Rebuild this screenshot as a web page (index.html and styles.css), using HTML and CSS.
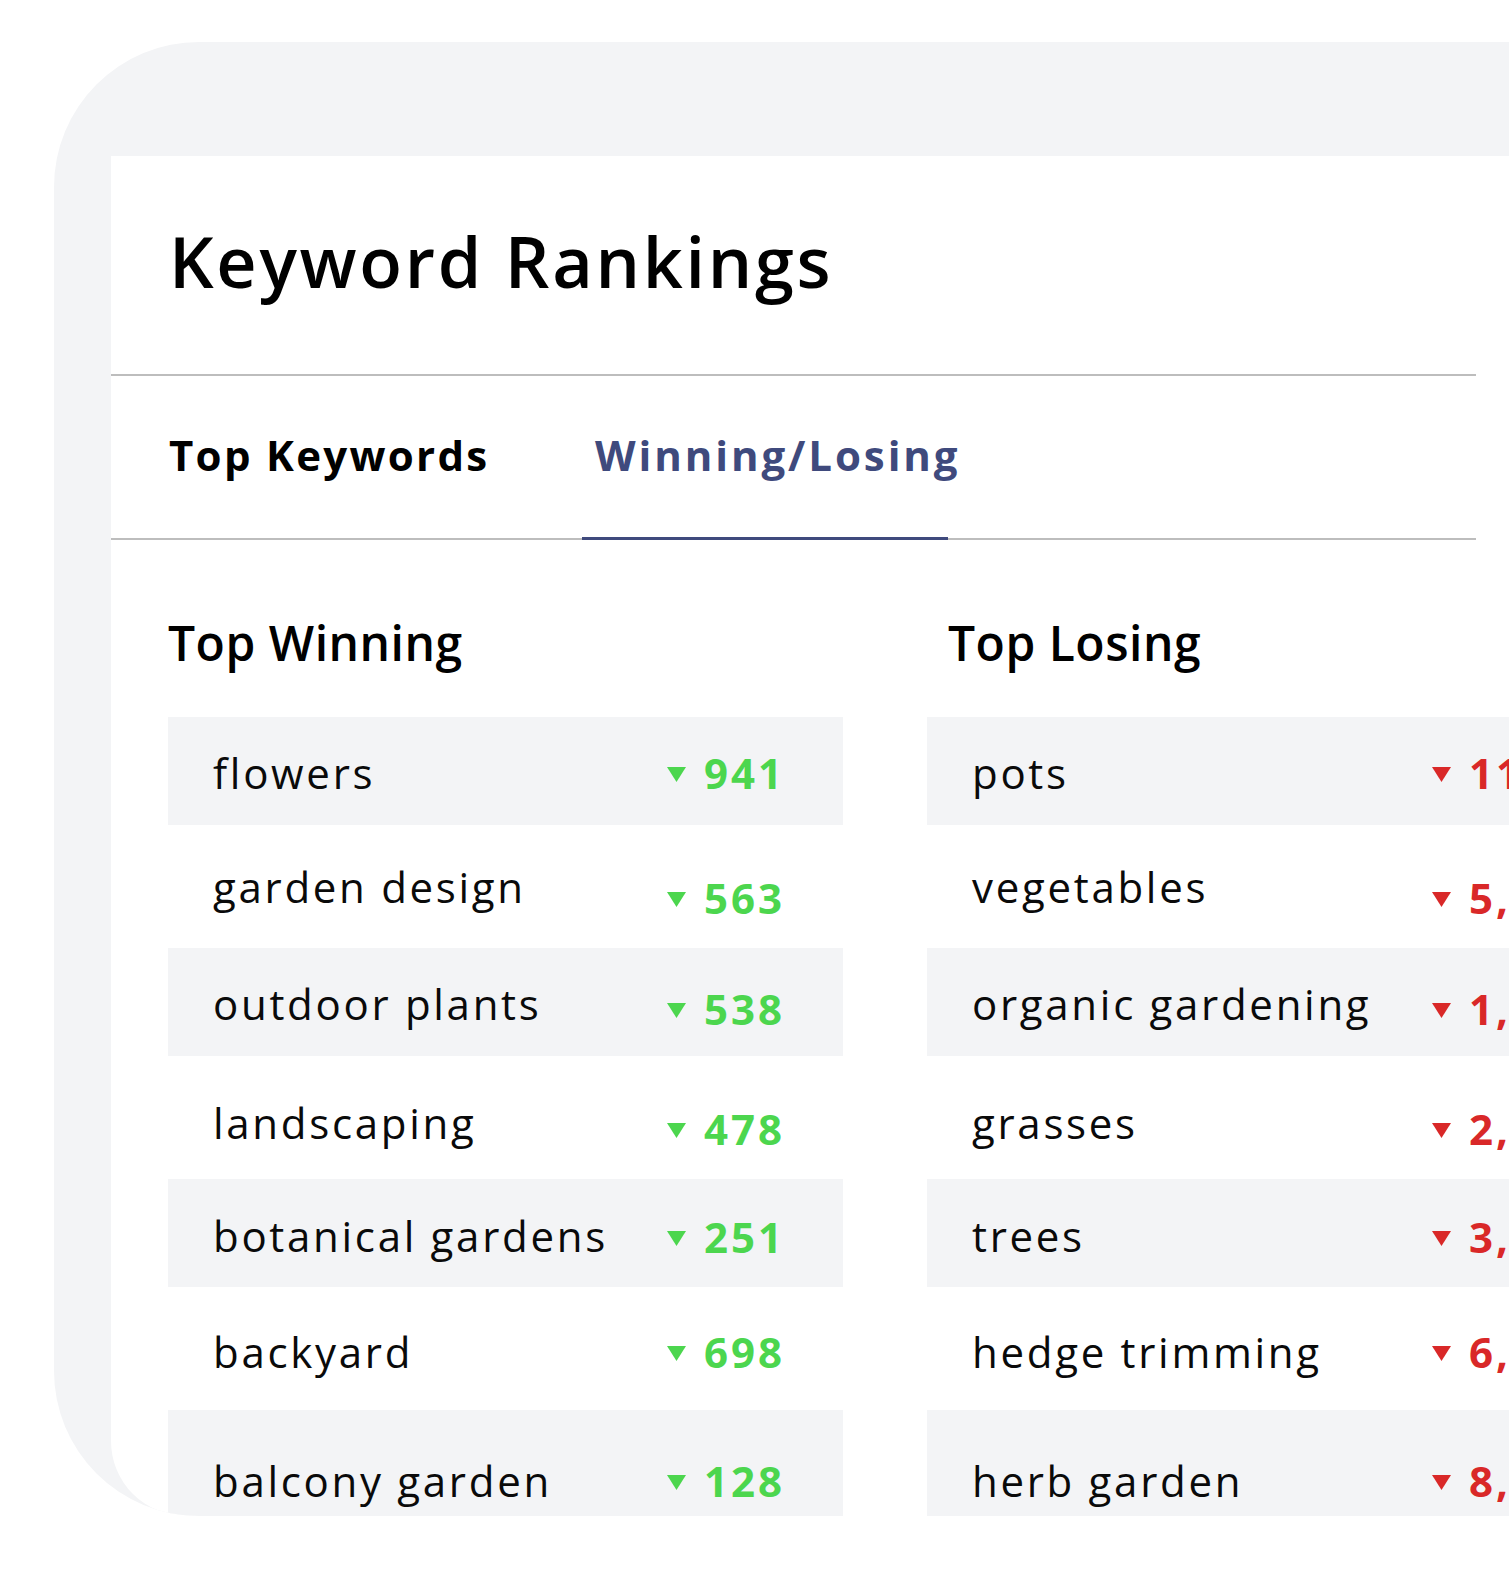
FILE: index.html
```html
<!DOCTYPE html>
<html lang="en">
<head>
<meta charset="utf-8">
<title>Keyword Rankings</title>
<link rel="stylesheet" href="styles.css">
</head>
<body>
<div class="frame">
  <section class="card">
    <header class="card-head">
      <h1 class="title">Keyword Rankings</h1>
    </header>
    <nav class="tabs">
      <div class="tab tab-first">Top Keywords</div>
      <div class="tab tab-active">Winning/Losing</div>
    </nav>
    <div class="columns">
      <div class="col col-win">
        <h2 class="col-title">Top Winning</h2>
        <ul class="rows">
          <li class="row"><span class="kw">flowers</span><span class="val up"><svg class="tri" viewBox="0 0 19 22" width="19" height="22"><polygon points="0,0 19,0 9.5,15"/></svg>941</span></li>
          <li class="row"><span class="kw">garden design</span><span class="val up"><svg class="tri" viewBox="0 0 19 22" width="19" height="22"><polygon points="0,0 19,0 9.5,15"/></svg>563</span></li>
          <li class="row"><span class="kw">outdoor plants</span><span class="val up"><svg class="tri" viewBox="0 0 19 22" width="19" height="22"><polygon points="0,0 19,0 9.5,15"/></svg>538</span></li>
          <li class="row"><span class="kw">landscaping</span><span class="val up"><svg class="tri" viewBox="0 0 19 22" width="19" height="22"><polygon points="0,0 19,0 9.5,15"/></svg>478</span></li>
          <li class="row"><span class="kw">botanical gardens</span><span class="val up"><svg class="tri" viewBox="0 0 19 22" width="19" height="22"><polygon points="0,0 19,0 9.5,15"/></svg>251</span></li>
          <li class="row"><span class="kw">backyard</span><span class="val up"><svg class="tri" viewBox="0 0 19 22" width="19" height="22"><polygon points="0,0 19,0 9.5,15"/></svg>698</span></li>
          <li class="row"><span class="kw">balcony garden</span><span class="val up"><svg class="tri" viewBox="0 0 19 22" width="19" height="22"><polygon points="0,0 19,0 9.5,15"/></svg>128</span></li>
        </ul>
      </div>
      <div class="col col-lose">
        <h2 class="col-title">Top Losing</h2>
        <ul class="rows">
          <li class="row"><span class="kw">pots</span><span class="val down"><svg class="tri" viewBox="0 0 19 22" width="19" height="22"><polygon points="0,0 19,0 9.5,15"/></svg>11,204</span></li>
          <li class="row"><span class="kw">vegetables</span><span class="val down"><svg class="tri" viewBox="0 0 19 22" width="19" height="22"><polygon points="0,0 19,0 9.5,15"/></svg>5,312</span></li>
          <li class="row"><span class="kw">organic gardening</span><span class="val down"><svg class="tri" viewBox="0 0 19 22" width="19" height="22"><polygon points="0,0 19,0 9.5,15"/></svg>1,873</span></li>
          <li class="row"><span class="kw">grasses</span><span class="val down"><svg class="tri" viewBox="0 0 19 22" width="19" height="22"><polygon points="0,0 19,0 9.5,15"/></svg>2,451</span></li>
          <li class="row"><span class="kw">trees</span><span class="val down"><svg class="tri" viewBox="0 0 19 22" width="19" height="22"><polygon points="0,0 19,0 9.5,15"/></svg>3,192</span></li>
          <li class="row"><span class="kw">hedge trimming</span><span class="val down"><svg class="tri" viewBox="0 0 19 22" width="19" height="22"><polygon points="0,0 19,0 9.5,15"/></svg>6,045</span></li>
          <li class="row"><span class="kw">herb garden</span><span class="val down"><svg class="tri" viewBox="0 0 19 22" width="19" height="22"><polygon points="0,0 19,0 9.5,15"/></svg>8,216</span></li>
        </ul>
      </div>
    </div>
  </section>
</div>
</body>
</html>
```

FILE: styles.css
```css
html, body {
  margin: 0;
  padding: 0;
  overflow: hidden;
  background: #ffffff;
}

body {
  font-family: "Open Sans", "Noto Sans", sans-serif;
  color: #000000;
}

.frame {
  margin: 42px 0 0 54px;
  width: 1600px;
  height: 1474px;
  box-sizing: border-box;
  padding: 114px 0 0 57px;
  background: #f3f4f6;
  border-radius: 145px 0 0 145px;
  overflow: hidden;
}

.card {
  background: #ffffff;
  height: 100%;
  border-bottom-left-radius: 75px;
  overflow: hidden;
}

.card-head {
  width: 1365px;
  height: 220px;
  box-sizing: border-box;
  border-bottom: 2px solid #bdbdbd;
  padding: 65px 0 0 58px;
}

.title {
  margin: 0;
  font-size: 70px;
  line-height: 80px;
  font-weight: 600;
  letter-spacing: 2.7px;
}

.tabs {
  width: 1365px;
  height: 164px;
  box-sizing: border-box;
  border-bottom: 2px solid #bdbdbd;
  display: flex;
  padding-left: 58px;
}

.tab {
  font-size: 42px;
  line-height: 50px;
  font-weight: 700;
  padding-top: 54px;
  letter-spacing: 2.3px;
}

.tab-first {
  width: 413px;
}

.tab-active {
  position: relative;
  padding-left: 13px;
  color: #3f4a7d;
  letter-spacing: 2.9px;
}

.tab-active::after {
  content: "";
  position: absolute;
  left: 0;
  bottom: -2px;
  width: 366px;
  height: 3px;
  background: #3f4a7d;
}

.columns {
  display: grid;
  grid-template-columns: 675px 675px;
  column-gap: 84px;
  padding-left: 57px;
}

.col-title {
  margin: 0 0 46px 0;
  padding-top: 75px;
  font-size: 48px;
  line-height: 56px;
  font-weight: 600;
  letter-spacing: 0.5px;
}

.col-lose .col-title {
  padding-left: 21px;
}

.rows {
  list-style: none;
  margin: 0;
  padding: 0;
}

.row {
  display: flex;
  align-items: flex-start;
  height: 108px;
  box-sizing: border-box;
  padding-left: 45px;
}

.row:nth-child(odd) {
  background: #f3f4f6;
}

.row:nth-child(even) {
  height: 123px;
}

.kw {
  flex-shrink: 0;
  width: 454px;
  font-size: 42px;
  line-height: 50px;
  font-weight: 400;
  letter-spacing: 2.7px;
  color: #0a0a0a;
}

.col-lose .kw {
  width: 460px;
}

.val {
  font-size: 42px;
  line-height: 50px;
  font-weight: 700;
  letter-spacing: 3px;
  white-space: nowrap;
}

.tri {
  display: inline-block;
  vertical-align: baseline;
  margin-right: 18px;
}

.up {
  color: #4cd64e;
}

.down {
  color: #d92828;
}

.tri polygon {
  fill: currentColor;
}

.row:nth-child(1) .kw, .row:nth-child(1) .val { padding-top: 31px; }
.row:nth-child(2) .kw { padding-top: 37px; }
.row:nth-child(2) .val { padding-top: 48px; }
.row:nth-child(3) .kw { padding-top: 31px; }
.row:nth-child(3) .val { padding-top: 36px; }
.row:nth-child(4) .kw { padding-top: 42px; }
.row:nth-child(4) .val { padding-top: 48px; }
.row:nth-child(5) .kw { padding-top: 32px; }
.row:nth-child(5) .val { padding-top: 33px; }
.row:nth-child(6) .kw, .row:nth-child(6) .val { padding-top: 40px; }
.row:nth-child(7) .kw, .row:nth-child(7) .val { padding-top: 46px; }
```
